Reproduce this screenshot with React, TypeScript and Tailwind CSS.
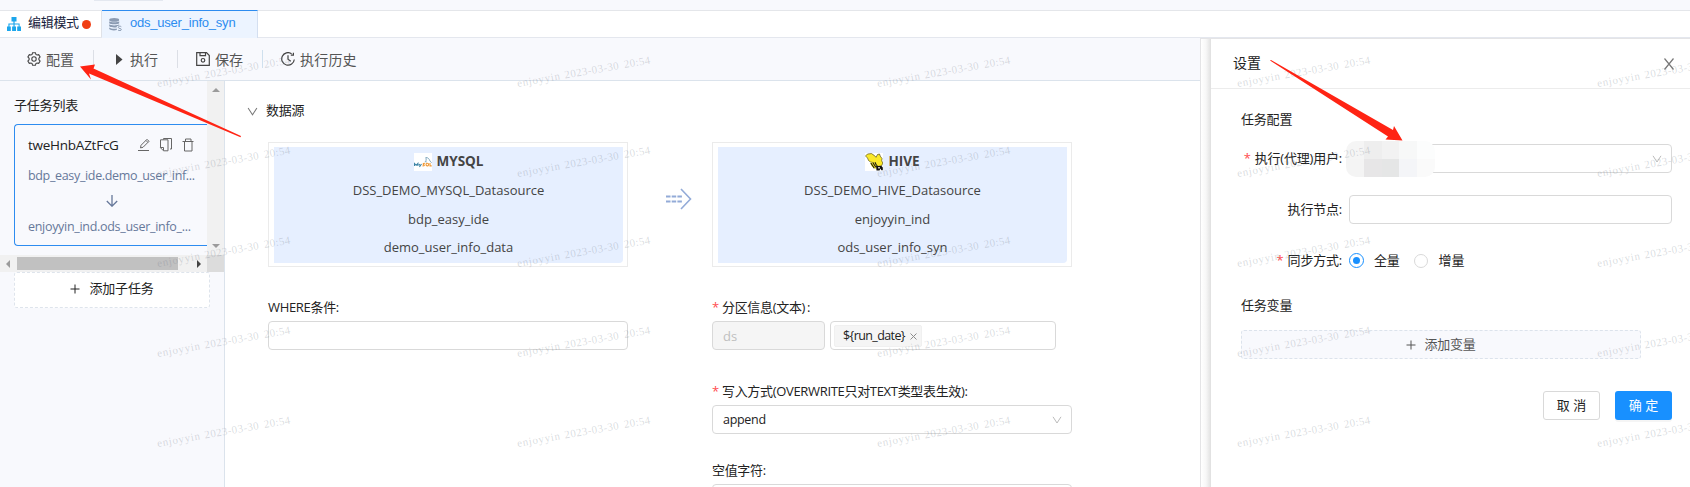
import React from 'react';

const SANS = 'font-["Open_Sans","Noto_Sans_CJK_SC",sans-serif]';

function Chevron({ className }: { className: string }) {
  return (
    <svg viewBox="0 0 12 12" className={className} fill="none" stroke="currentColor" strokeWidth="1.1">
      <path d="M1.2 2.2 6 9.6l4.8-7.4" />
    </svg>
  );
}

function Plus() {
  return (
    <svg viewBox="0 0 10 10" className="h-[10px] w-[10px]" stroke="currentColor" strokeWidth="1">
      <path d="M5 0.5v9M0.5 5h9" />
    </svg>
  );
}

function TabBar() {
  return (
    <div className="flex h-[27px] border-b border-[#e4e7ee] bg-white">
      <div className="flex h-[26px] w-[102px] items-center border-r border-[#dfe2e8] pl-[7px]">
        <svg viewBox="0 0 14 14" className="h-[14px] w-[14px]" fill="#1ba6ec">
          <path d="M4.500 0h5v4.400H7.600v2.200h5v3H14V14h-3.800V9.600h1.400V7.600h-4v2H9V14H5.100V9.600h1.400v-2h-4v2H3.800V14H0V9.600h1.400v-3h5V4.400H4.500z" />
        </svg>
        <span className="-mt-[2px] ml-[7px] text-[13px] tracking-[-0.3px] text-[#17233d]">编辑模式</span>
        <span className="ml-[3px] h-[9px] w-[9px] rounded-full bg-[#f03e14]" />
      </div>
      <div className="flex h-[28px] w-[156px] -mt-px items-center border-t border-r border-t-[#2d8cf0] border-r-[#d4dff0] bg-[#ecf4ff] pl-[7px]">
        <svg viewBox="0 0 13 13" className="h-[13px] w-[13px]">
          <g fill="#8b9bb2">
            <ellipse cx="5.2" cy="1.9" rx="5" ry="1.8" />
            <path d="M.2 3.2c1.4 1.5 8.600 1.500 10 0v2c-1.400 1.500-8.600 1.500-10 0zM.2 6.300c1.400 1.500 8.600 1.500 10 0v1.200l-2.400.7v1.100c-3 .4-6.400.1-7.600-1zM.2 9.400c1.200 1.300 5 1.500 7.600 1.100v1.600c-3 .6-6.600.2-7.600-1z" />
          </g>
          <path d="M12.300 8.700c-.8-.8-3.200-.6-3 .8s3 .6 3 2-2.400 1.400-3.300.5" fill="none" stroke="#8b9bb2" strokeWidth="1" />
        </svg>
        <span className="-mt-[3px] ml-[8px] font-['Liberation_Sans',sans-serif] text-[13px] tracking-[-0.22px] text-[#2d8cf0]">ods_user_info_syn</span>
      </div>
    </div>
  );
}

function Toolbar() {
  return (
    <div className="flex h-[43px] items-center border-b border-[#dbe3ec] bg-[#f8f9fd] text-[14px] text-[#555]">
      <div className="flex w-[93px] items-center pl-[27px]">
        <svg viewBox="0 0 14 14" className="h-[14px] w-[14px]" fill="none" stroke="#444" strokeWidth="1.100">
          <path d="M5.600 .7h2.800l.5 1.700 1.100.6 1.700-.4 1.400 2.400-1.200 1.300v1.400l1.200 1.300-1.400 2.400-1.700-.4-1.100.6-.5 1.700H5.600l-.5-1.700L4 11l-1.700.4L.9 9l1.200-1.300V6.300L.9 5l1.400-2.400L4 3l1.100-.6z" />
          <circle cx="7" cy="7" r="2.200" />
        </svg>
        <span className="ml-[5px]">配置</span>
      </div>
      <div className="flex h-[18px] w-[84px] items-center border-l border-[#dcdfe6] pl-[22px]">
        <svg viewBox="0 0 7 11" className="h-[11px] w-[7px]" fill="#444"><path d="M0 0l6.500 5.500L0 11z" /></svg>
        <span className="ml-[7px]">执行</span>
      </div>
      <div className="flex h-[18px] w-[85px] items-center border-l border-[#dcdfe6] pl-[18px]">
        <svg viewBox="0 0 14 14" className="h-[14px] w-[14px]" fill="none" stroke="#444" strokeWidth="1.200">
          <path d="M.7.7h9.800l2.800 2.800v9.800H.7zM4 .7v3h5.500v-3" />
          <circle cx="7" cy="8.300" r="1.800" />
        </svg>
        <span className="ml-[5px]">保存</span>
      </div>
      <div className="flex h-[18px] items-center border-l border-[#cfe0ee] pl-[18px]">
        <svg viewBox="0 0 14 14" className="h-[14px] w-[14px]" fill="none" stroke="#444" strokeWidth="1.200">
          <path d="M10.600 1.700A6.300 6.300 0 1 0 13.300 7.500M7 3.300v4l2.800 1.900M9.800 3.200h2.600V.8" />
        </svg>
        <span className="ml-[5px] tracking-[0.2px]">执行历史</span>
      </div>
    </div>
  );
}

function TaskCard() {
  return (
    <div className="h-[122px] w-[193px] shrink-0 rounded-l-[4px] border border-r-0 border-[#2d8cf0] pl-[13px] text-[12.500px]">
      <div className="mt-[10px] flex h-[20px] items-center">
        <span className="w-[110px] text-[13.500px] tracking-[-0.25px] text-[#222]">tweHnbAZtFcG</span>
        <svg viewBox="0 0 56 14" className="h-[14px] w-[56px]" fill="none" stroke="#666" strokeWidth="1">
          <path d="M0 12.500h11M2.500 9.900l.5-2.600 6-6 2 2-6 6zM8 2.500l1.800 1.800" />
          <path d="M25.500 1.500V.5h8v10.500h-1.500M22.500 1.800h7.500v11h-4.500l-3-3zM22.500 9.500h3v3" />
          <path d="M44.500 3.500h11M46.500 3.500v9.500h7.500V3.500M47.500 3.500v-2.500h5.500v2.500" />
        </svg>
      </div>
      <div className="mt-[11px] h-[20px] leading-[20px] tracking-[-0.34px] text-[#66789a]">bdp_easy_ide.demo_user_inf...</div>
      <div className="flex h-[31px] w-[167px] items-center justify-center pb-px">
        <svg viewBox="0 0 12 12" className="h-[12px] w-[12px]" fill="none" stroke="#66789a" strokeWidth="1.300">
          <path d="M6 0v11M.8 6 6 11.200 11.200 6" />
        </svg>
      </div>
      <div className="h-[20px] leading-[20px] tracking-[-0.3px] text-[#66789a]">enjoyyin_ind.ods_user_info_...</div>
    </div>
  );
}

function Sidebar() {
  return (
    <aside className="flex w-[225px] shrink-0 flex-col border-r border-[#dbe3ec] bg-[#f8f9fd] text-[13px]">
      <div className="flex h-[174px]">
        <div className="w-[207px] overflow-hidden pl-[14px] pt-[14px]">
          <div className="h-[20px] leading-[20px] tracking-[-0.2px] text-[#222]">子任务列表</div>
          <div className="mt-[9px]"><TaskCard /></div>
        </div>
        <div className="flex w-[17px] flex-col items-center justify-between bg-[#f1f1f1] pt-[7px] pb-[7px]">
          <svg viewBox="0 0 8 4" className="h-[4px] w-[8px]" fill="#9b9b9b"><path d="M0 4l4-4 4 4z" /></svg>
          <svg viewBox="0 0 8 4" className="h-[4px] w-[8px]" fill="#9b9b9b"><path d="M0 0l4 4 4-4z" /></svg>
        </div>
      </div>
      <div className="flex h-[17px]">
        <div className="flex w-[207px] items-center bg-[#f1f1f1] pl-[6px]">
          <svg viewBox="0 0 4 8" className="h-[8px] w-[4px]" fill="#9b9b9b"><path d="M4 0v8L0 4z" /></svg>
          <div className="ml-[7px] h-[13px] w-[161px] bg-[#c1c1c1]" />
          <svg viewBox="0 0 4 8" className="ml-[19px] h-[8px] w-[4px]" fill="#444"><path d="M0 0v8l4-4z" /></svg>
        </div>
        <div className="w-[17px] bg-[#dcdcdc]" />
      </div>
      <button className="ml-[14px] flex h-[36px] w-[196px] items-center justify-center gap-[9px] rounded-[3px] border border-dashed border-[#dee4ec] bg-white pb-[2px] text-[13px] tracking-[-0.2px] text-[#222]">
        <Plus />
        <span>添加子任务</span>
      </button>
    </aside>
  );
}

function MysqlLogo() {
  return (
    <svg viewBox="0 0 18 18" className="h-[18px] w-[18px]">
      <rect width="18" height="18" fill="#fff" />
      <path d="M.5 13v-2.500l1.700 1.800 1.700-1.800V13M5 11l1.200 1.800L7.500 11M6.200 12.800l-.7 1.200" fill="none" stroke="#3d84a6" strokeWidth="1.100" />
      <path d="M11 10.500c-1-.5-2.600.2-1.500 1s1.500 1.300-1 1.400M12 11.600a1.300 1.300 0 1 0 2.600 0 1.300 1.300 0 1 0-2.600 0M16 10v2.900h1.700" fill="none" stroke="#f09a38" strokeWidth="1.100" />
      <path d="M11.500 4.500c2.500-.4 4 1.800 4.500 3.700l1.700 1.500M12 5l.2 2.200-1 1.500 1.600.3" fill="none" stroke="#6797b0" strokeWidth=".8" />
    </svg>
  );
}

function HiveLogo() {
  return (
    <svg viewBox="0 0 18 18" className="h-[18px] w-[18px]">
      <rect width="18" height="18" fill="#fff" />
      <path d="M.5 3 2.500 1l4-.4 3 2 1.500 1.700L12.500 1.500l2-.5.8 2.200 1.700 2.300-.3 2.300 1.100 2.200-1 2.500-3.300 1-2.500-1.500L8 9.500 5.500 9 3.500 7.500 2.500 5z" fill="#fbe92a" stroke="#3a380f" strokeWidth=".6" />
      <path d="M5.500 9.500c-.3 2.500 1.500 5 5.500 6.500l1-3.500-3-3z" fill="#fbe92a" />
      <path d="M5.800 10l3.500 5.300M7.800 9.500l3 4.800M10 9.300l1.500 3.200" stroke="#1c1c10" strokeWidth="1.100" />
      <path d="M11 12.500l3 .5h2.500l1.300 1.500v2.700h-1.500l-.8-1.700-1 2h-3z" fill="#111" />
      <path d="M13.300 14h1.400v1.400h-1.400z" fill="#fff" />
    </svg>
  );
}

function SourceBox({ logo, name, rows }: { logo: React.ReactNode; name: string; rows: string[] }) {
  return (
    <div className="h-[125px] w-[360px] border border-[#ebebeb] bg-white px-[5px] pt-[4px]">
      <div className="h-[116px] w-[349px] rounded-br-[4px] bg-[#e6efff] text-center text-[13px] text-[#444]">
        <div className="flex h-[29px] items-center justify-center gap-[5px] pt-px font-bold">
          {logo}
          <span className="-mt-[2px] text-[13.500px]">{name}</span>
        </div>
        {rows.map((r) => (
          <div key={r} className="h-[28.500px] leading-[29px]">{r}</div>
        ))}
      </div>
    </div>
  );
}

function Label({ children, required }: { children: React.ReactNode; required?: boolean }) {
  return (
    <div className="flex h-[20px] items-center text-[13px] tracking-[-0.32px] text-[#222]">
      {required && <span className="mr-[4px] w-[6px] text-[13px] text-[#ff4d4f]">*</span>}
      <span className="whitespace-nowrap">{children}</span>
    </div>
  );
}

function Main() {
  return (
    <main className="h-[406px] w-[975px] shrink-0 overflow-hidden bg-white pl-[43px] pt-[20px]">
      <div className="-ml-[21px] flex h-[20px] items-center text-[#222]">
        <Chevron className="h-[11px] w-[11px] text-[#777]" />
        <span className="ml-[8px] text-[13px] tracking-[-0.2px]">数据源</span>
      </div>
      <div className="mt-[21px] flex items-center">
        <SourceBox logo={<MysqlLogo />} name="MYSQL" rows={['DSS_DEMO_MYSQL_Datasource', 'bdp_easy_ide', 'demo_user_info_data']} />
        <div className="flex w-[84px] justify-end pr-[20px] pb-[12px]">
          <svg viewBox="0 0 26 22" className="h-[22px] w-[26px]" fill="none" stroke="#93abd8" strokeWidth="1.800">
            <path d="M0 8.500h17M0 13.500h17" strokeDasharray="4.500 1.200" />
            <path d="M15 1l9.500 10L15 21" strokeWidth="1.600" />
          </svg>
        </div>
        <SourceBox logo={<HiveLogo />} name="HIVE" rows={['DSS_DEMO_HIVE_Datasource', 'enjoyyin_ind', 'ods_user_info_syn']} />
      </div>
      <div className="mt-[31px] flex gap-[84px]">
        <div className="w-[360px]">
          <Label>WHERE条件:</Label>
          <div className="mt-[3px] h-[29px] rounded-[4px] border border-[#d9d9d9]" />
        </div>
        <div className="w-[360px]">
          <Label required>分区信息(文本)<span className="ml-[2px]">:</span></Label>
          <div className="mt-[3px] flex gap-[5px]">
            <div className="h-[29px] w-[113px] rounded-[4px] border border-[#d9d9d9] bg-[#f5f5f5] pl-[10px] text-[13px] leading-[28px] text-[#bfbfbf]">ds</div>
            <div className="flex h-[29px] w-[226px] items-center rounded-[4px] border border-[#d9d9d9] pl-[3px]">
              <div className="flex h-[22px] w-[88px] items-center rounded-[2px] border border-[#f0f0f0] bg-[#f5f5f5] pl-[8px] text-[12.500px] tracking-[-0.6px] text-[#222]">
                <span className="w-[64px] pt-px">{'${run_date}'}</span>
                <svg viewBox="0 0 7 7" className="mt-px ml-[3px] h-[7px] w-[7px] shrink-0" stroke="#8c8c8c"><path d="M.5.5l6 6M6.500.5l-6 6" /></svg>
              </div>
            </div>
          </div>
          <div className="mt-[32px]">
            <Label required>写入方式(OVERWRITE只对TEXT类型表生效):</Label>
          </div>
          <div className="mt-[3px] flex h-[29px] items-center justify-between rounded-[4px] border border-[#d9d9d9] pt-px pl-[10px] pr-[9px] text-[12.500px] tracking-[-0.3px] text-[#222]">
            <span className="pt-px">append</span>
            <Chevron className="h-[10px] w-[10px] text-[#b5b5b5]" />
          </div>
          <div className="mt-[27px]">
            <Label>空值字符:</Label>
          </div>
          <div className="mt-[3px] h-[29px] rounded-[4px] border border-[#d9d9d9]" />
        </div>
      </div>
    </main>
  );
}

const MOSAIC = [
  'bg-[#f5f5f5]', 'bg-[#eeeeee]', 'bg-[#f2f2f2]', 'bg-[#f7f8f8]', 'bg-[#fcfdfd]',
  'bg-[#f4f4f4]', 'bg-[#e7e6e7]', 'bg-[#e5e6e6]', 'bg-[#f4f5f8]', 'bg-[#fafafa]',
];

function FieldLabel({ children, required }: { children: React.ReactNode; required?: boolean }) {
  return (
    <div className="mr-[7px] flex w-[101px] items-center justify-end text-[13px] tracking-[-0.2px]">
      {required && <span className="mr-[4px] text-[#ff4d4f]">*</span>}
      <span className="whitespace-nowrap">{children}</span>
    </div>
  );
}

function Drawer() {
  return (
    <section className="flex h-[449px] w-[490px] shrink-0 border-t border-l border-[#e4e4e6] bg-white text-[#222]">
      <div className="w-[10px] bg-linear-to-r from-[#ffffff] via-[#f7f7f7] to-[#e0e0e0]" />
      <div className="w-[479px] bg-white">
        <div className="flex h-[50px] items-center justify-between border-b border-[#ececec] pl-[22px] pr-[16px] pb-[2px]">
          <span className="text-[14px]">设置</span>
          <svg viewBox="0 0 10 12" className="mt-[3px] h-[12px] w-[10px]" stroke="#777" strokeWidth="1.200"><path d="M.5.5l9 11M9.500.5l-9 11" /></svg>
        </div>
        <div className="pl-[30px] pr-[18px] text-[13px]">
          <div className="mt-[20px] h-[20px] leading-[20px] tracking-[-0.2px]">任务配置</div>
          <div className="mt-[15px] flex h-[29px]">
            <FieldLabel required>执行(代理)用户:</FieldLabel>
            <div className="relative flex h-[29px] w-[323px] items-center justify-end rounded-[4px] border border-[#d9d9d9] pr-[9px]">
              <div className="absolute -left-[4px] -top-[4px] grid h-[36px] w-[89px] grid-cols-5 grid-rows-2 overflow-hidden rounded-[10px]">
                {MOSAIC.map((c, i) => <div key={i} className={c} />)}
              </div>
              <Chevron className="h-[10px] w-[10px] text-[#b5b5b5]" />
            </div>
          </div>
          <div className="mt-[22px] flex h-[29px]">
            <FieldLabel>执行节点:</FieldLabel>
            <div className="h-[29px] w-[323px] rounded-[4px] border border-[#d9d9d9]" />
          </div>
          <div className="mt-[22px] flex h-[29px] items-center">
            <FieldLabel required>同步方式:</FieldLabel>
            <span className="flex h-[15px] w-[15px] items-center justify-center rounded-full border border-[#1890ff]">
              <span className="h-[7px] w-[7px] rounded-full bg-[#1890ff]" />
            </span>
            <span className="ml-[10px] tracking-[-0.2px]">全量</span>
            <span className="ml-[14px] h-[14px] w-[14px] rounded-full border border-[#d9d9d9]" />
            <span className="ml-[11px] tracking-[-0.2px]">增量</span>
          </div>
          <div className="mt-[20px] h-[20px] leading-[20px] tracking-[-0.2px]">任务变量</div>
          <button className="mt-[15px] flex h-[29px] w-[400px] items-center justify-center gap-[8px] rounded-[3px] border border-dashed border-[#dce3ec] bg-[#f8f9fd] text-[13px] tracking-[-0.2px] text-[#555]">
            <Plus />
            <span>添加变量</span>
          </button>
          <div className="mt-[32px] flex justify-end gap-[15px]">
            <button className="h-[29px] w-[57px] rounded-[3px] border border-[#d9d9d9] bg-white text-[13px]">取 消</button>
            <button className="h-[29px] w-[57px] rounded-[3px] bg-[#1890ff] text-[13px] text-white shadow-[0_2px_0_rgba(0,0,0,0.04)]">确 定</button>
          </div>
        </div>
      </div>
    </section>
  );
}

const MARK_COLUMNS = [157, 517, 877, 1237, 1597];
const MARK_ROWS = [83, 173, 263, 353, 443];

function Watermarks() {
  return (
    <div className="pointer-events-none absolute inset-0 overflow-hidden font-['Liberation_Serif',serif] text-[11px] leading-[12px] text-[#78808c]/28">
      {MARK_ROWS.map((y) =>
        MARK_COLUMNS.map((x) => (
          <div key={`${x}-${y}`} className="absolute origin-left -rotate-10 whitespace-nowrap" style={{ left: x, top: y - 6 }}>
            <span className="tracking-[0.7px]">enjoyyin</span>
            <span className="ml-[4px] tracking-[0.4px]">2023-03-30</span>
            <span className="ml-[5px] tracking-[0.4px]">20:54</span>
          </div>
        )),
      )}
    </div>
  );
}

function Arrows() {
  return (
    <svg viewBox="0 0 1690 487" className="pointer-events-none absolute inset-0 h-[487px] w-[1690px]" fill="#ff2414">
      <path d="M80 66.500 L95 64.500 L93.500 68.500 L241 136 L240.500 137.300 L89 73.500 L91 79.500 Z" />
      <path d="M1270 60.500 L1271 60 L1393 130 L1394 126 L1402.500 140.500 L1385.500 139.500 L1388 136.500 Z" />
    </svg>
  );
}

export default function App() {
  return (
    <div className={`relative h-[487px] w-[1690px] overflow-hidden bg-white ${SANS}`}>
      <div className="h-[11px] border-b border-[#e4e6ea] bg-[#f8f9fd]">
        <div className="ml-[94px] h-[1px] w-[69px] bg-[#e4e8f0]" />
      </div>
      <TabBar />
      <div className="flex">
        <div className="w-[1200px] shrink-0">
          <Toolbar />
          <div className="flex h-[406px]">
            <Sidebar />
            <Main />
          </div>
        </div>
        <Drawer />
      </div>
      <Watermarks />
      <Arrows />
    </div>
  );
}
